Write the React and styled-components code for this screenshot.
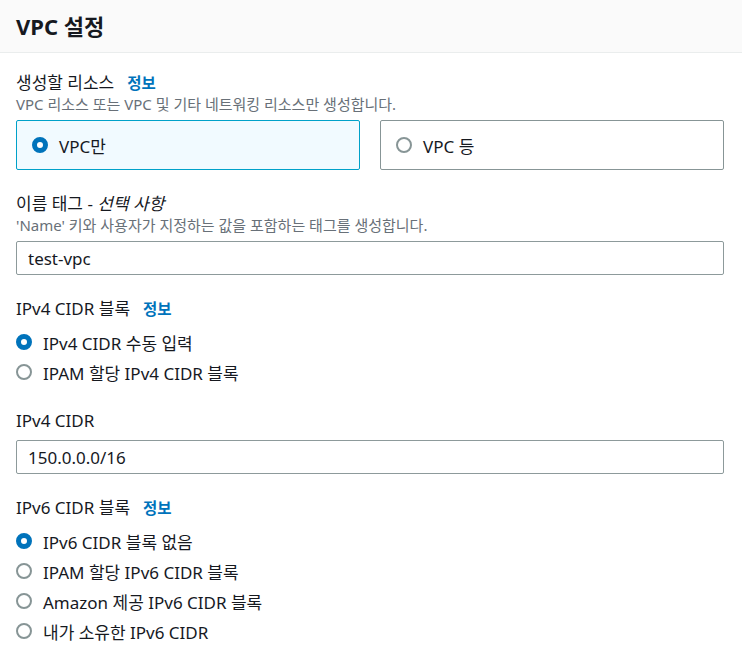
import React from 'react';
import styled, { createGlobalStyle } from 'styled-components';

const GlobalStyle = createGlobalStyle`
  html, body {
    margin: 0;
    padding: 0;
    background: #ffffff;
  }
  body {
    font-family: "Noto Sans", "Noto Sans CJK KR", sans-serif;
    color: #16191f;
  }
  * {
    box-sizing: border-box;
  }
`;

const Panel = styled.section`
  width: 742px;
  background: #ffffff;
`;

const Header = styled.header`
  height: 53px;
  display: flex;
  align-items: center;
  padding: 0 16px;
  background: #fafafa;
  border-bottom: 1px solid #eaeded;
`;

const Title = styled.h2`
  margin: 0;
  font-size: 22px;
  font-weight: 700;
  line-height: 28px;
  color: #16191f;
`;

const Body = styled.div`
  padding: 19px 18px 20px 16px;
  display: flex;
  flex-direction: column;
  gap: 23px;
`;

const Field = styled.div`
  display: flex;
  flex-direction: column;
`;

const Label = styled.div`
  font-size: 17px;
  line-height: 22px;
  color: #16191f;

  em {
    font-style: italic;
  }
`;

const InfoLink = styled.a`
  margin-left: 13px;
  font-size: 15.5px;
  font-weight: 700;
  color: #0073bb;
  text-decoration: none;
`;

const Description = styled.div`
  margin-top: 2px;
  font-size: 15px;
  line-height: 16px;
  color: #687078;
`;

const Control = styled.div`
  margin-top: ${({ $tight }) => ($tight ? '7px' : '8px')};
`;

const TileGrid = styled.div`
  display: grid;
  grid-template-columns: 1fr 1fr;
  gap: 20px;
`;

const Tile = styled.label`
  height: 50px;
  display: flex;
  align-items: center;
  gap: 11px;
  padding: 0 15px;
  border: 1px solid ${({ $checked }) => ($checked ? '#00a1c9' : '#879596')};
  border-radius: 2px;
  background: ${({ $checked }) => ($checked ? '#f1faff' : '#ffffff')};
  font-size: 17px;
  color: #16191f;
`;

const Radio = styled.span`
  flex: none;
  width: 16px;
  height: 16px;
  border-radius: 50%;
  background: #ffffff;
  border: ${({ $checked }) => ($checked ? '5px solid #0073bb' : '2px solid #879596')};
`;

const RadioList = styled.div`
  display: flex;
  flex-direction: column;
`;

const RadioRow = styled.label`
  height: 30px;
  display: flex;
  align-items: center;
  gap: 11px;
  font-size: 17px;
  color: #16191f;
`;

const Input = styled.input`
  width: 100%;
  height: 34px;
  padding: 0 11px;
  border: 1px solid #8d9a9b;
  border-radius: 2px;
  font-family: inherit;
  font-size: 17px;
  color: #16191f;
  background: #ffffff;
  outline: none;
`;

const RadioGroup = ({ options, selected }) => (
  <RadioList>
    {options.map((opt) => (
      <RadioRow key={opt}>
        <Radio $checked={opt === selected} />
        {opt}
      </RadioRow>
    ))}
  </RadioList>
);

const ipv4Options = ['IPv4 CIDR 수동 입력', 'IPAM 할당 IPv4 CIDR 블록'];
const ipv6Options = [
  'IPv6 CIDR 블록 없음',
  'IPAM 할당 IPv6 CIDR 블록',
  'Amazon 제공 IPv6 CIDR 블록',
  '내가 소유한 IPv6 CIDR',
];

export default function App() {
  return (
    <>
      <GlobalStyle />
      <Panel>
        <Header>
          <Title>VPC 설정</Title>
        </Header>
        <Body>
          <Field>
            <Label>
              생성할 리소스<InfoLink href="#">정보</InfoLink>
            </Label>
            <Description>VPC 리소스 또는 VPC 및 기타 네트워킹 리소스만 생성합니다.</Description>
            <Control>
              <TileGrid>
                <Tile $checked>
                  <Radio $checked />
                  VPC만
                </Tile>
                <Tile>
                  <Radio />
                  VPC 등
                </Tile>
              </TileGrid>
            </Control>
          </Field>

          <Field>
            <Label>
              이름 태그 - <em>선택 사항</em>
            </Label>
            <Description>'Name' 키와 사용자가 지정하는 값을 포함하는 태그를 생성합니다.</Description>
            <Control>
              <Input defaultValue="test-vpc" />
            </Control>
          </Field>

          <Field>
            <Label>
              IPv4 CIDR 블록<InfoLink href="#">정보</InfoLink>
            </Label>
            <Control $tight>
              <RadioGroup options={ipv4Options} selected={ipv4Options[0]} />
            </Control>
          </Field>

          <Field>
            <Label>IPv4 CIDR</Label>
            <Control>
              <Input defaultValue="150.0.0.0/16" />
            </Control>
          </Field>

          <Field>
            <Label>
              IPv6 CIDR 블록<InfoLink href="#">정보</InfoLink>
            </Label>
            <Control $tight>
              <RadioGroup options={ipv6Options} selected={ipv6Options[0]} />
            </Control>
          </Field>
        </Body>
      </Panel>
    </>
  );
}
